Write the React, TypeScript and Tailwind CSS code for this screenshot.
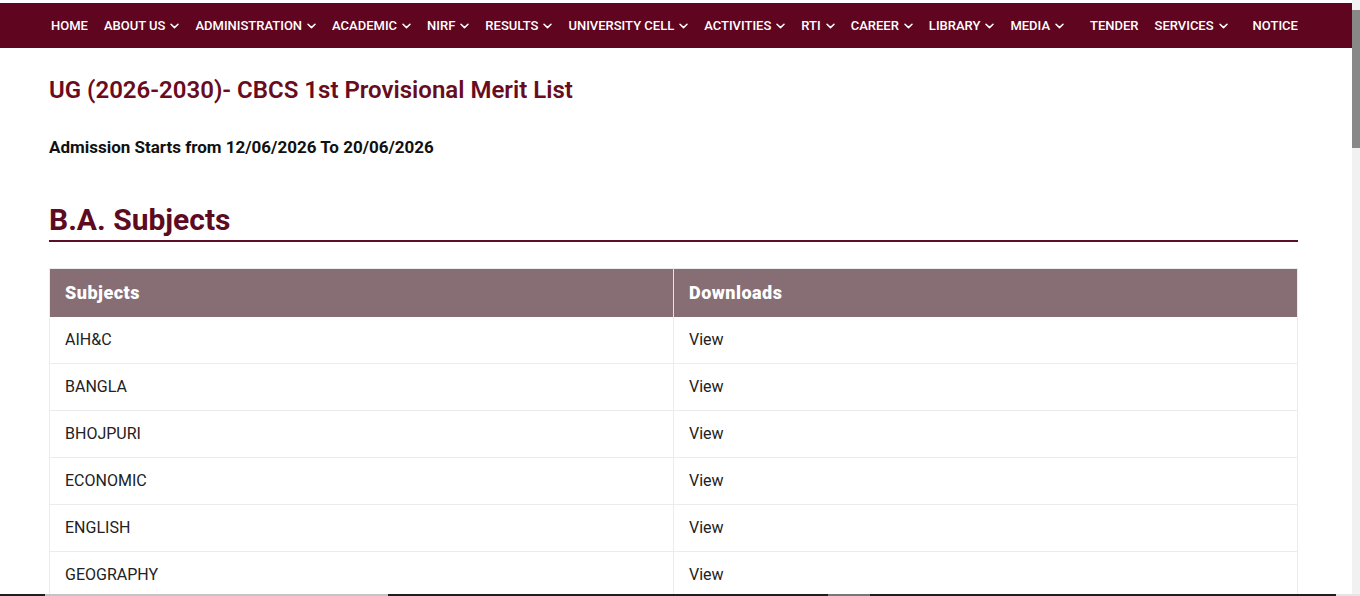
import React from "react";

const Chevron = () => (
  <svg width="9" height="6" viewBox="0 0 9 6" className="ml-[5px] mt-[1px]" fill="none">
    <path d="M1 1.2 L4.5 4.6 L8 1.2" stroke="white" strokeWidth="1.5" strokeLinecap="round" strokeLinejoin="round" />
  </svg>
);

const navItems: { label: string; chev: boolean; ml?: string }[] = [
  { label: "HOME", chev: false },
  { label: "ABOUT US", chev: true },
  { label: "ADMINISTRATION", chev: true },
  { label: "ACADEMIC", chev: true },
  { label: "NIRF", chev: true },
  { label: "RESULTS", chev: true },
  { label: "UNIVERSITY CELL", chev: true },
  { label: "ACTIVITIES", chev: true },
  { label: "RTI", chev: true },
  { label: "CAREER", chev: true },
  { label: "LIBRARY", chev: true },
  { label: "MEDIA", chev: true },
  { label: "TENDER", chev: false, ml: "ml-[10px]" },
  { label: "SERVICES", chev: true },
  { label: "NOTICE", chev: false, ml: "ml-[9px]" },
];

const rows = ["AIH&C", "BANGLA", "BHOJPURI", "ECONOMIC", "ENGLISH", "GEOGRAPHY"];

export default function App() {
  return (
    <div className="relative flex h-[596px] w-[1360px] overflow-hidden bg-white" style={{ fontFamily: "Roboto, 'Noto Sans', sans-serif" }}>
      <div className="flex w-[1352px] shrink-0 flex-col pt-[3px]">
        <nav className="flex h-[45px] shrink-0 items-center bg-[#5f051f] pl-[51px] text-[13px] font-medium text-white">
          <div className="flex items-center gap-[16px]">
            {navItems.map((it) => (
              <div key={it.label} className={`flex items-center ${it.ml ?? ""}`}>
                <span>{it.label}</span>
                {it.chev && <Chevron />}
              </div>
            ))}
          </div>
        </nav>
        <main className="shrink-0 pl-[49px] pr-[54px]">
          <h1 className="mt-[27px] text-[24px] font-semibold leading-[30px] text-[#690c20]">
            UG (2026-2030)- CBCS 1st Provisional Merit List
          </h1>
          <p className="mt-[31px] text-[17px] font-bold leading-[22px] text-[#111]">
            Admission Starts from 12/06/2026 To 20/06/2026
          </p>
          <h2 className="mt-[44px] text-[30px] font-bold leading-[36px] text-[#5e0a1f]">B.A. Subjects</h2>
          <div className="mt-[2px] h-[2px] bg-[#5a1026]" />
          <table className="mt-[26px] w-full border-collapse border border-[#ececec] text-left">
            <thead>
              <tr className="h-[48px] bg-[#866e74] text-white">
                <th className="w-1/2 border-r border-[#e8e0e2] px-[15px] text-[18px] font-black tracking-[0.5px]">Subjects</th>
                <th className="px-[15px] text-[18px] font-black tracking-[0.5px]">Downloads</th>
              </tr>
            </thead>
            <tbody>
              {rows.map((r) => (
                <tr key={r} className="h-[47px] border-b border-[#ececec] text-[16px] text-[#222]">
                  <td className="border-r border-[#ececec] px-[15px]">{r}</td>
                  <td className="px-[15px]">View</td>
                </tr>
              ))}
            </tbody>
          </table>
        </main>
      </div>
      <div className="flex w-[8px] shrink-0 flex-col bg-[#f1f1f1]">
        <div className="mt-[10px] h-[138px] bg-[#888888]" />
      </div>
      <div className="absolute bottom-0 left-0 flex h-[2px] w-[1360px]">
        <div className="w-[45px] bg-[#1e1e1e]" />
        <div className="w-[343px] bg-[#c4c4c4]" />
        <div className="w-[440px] bg-[#1e1e1e]" />
        <div className="w-[42px] bg-[#777]" />
        <div className="w-[466px] bg-[#1e1e1e]" />
        <div className="flex-1 bg-[#e5e5e5]" />
      </div>
    </div>
  );
}
